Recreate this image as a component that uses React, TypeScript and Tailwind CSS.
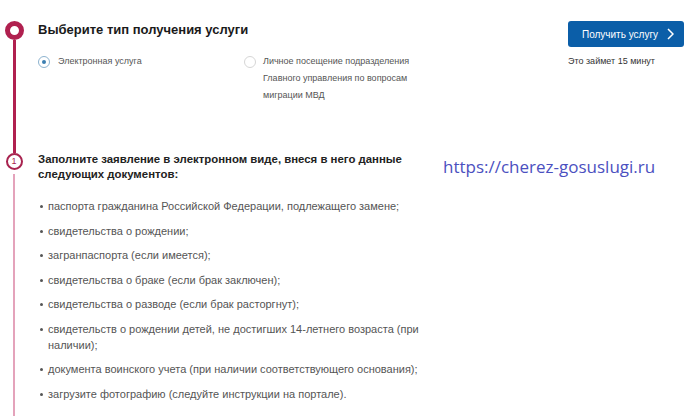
import React from "react";

const docs = [
  "паспорта гражданина Российской Федерации, подлежащего замене;",
  "свидетельства о рождении;",
  "загранпаспорта (если имеется);",
  "свидетельства о браке (если брак заключен);",
  "свидетельства о разводе (если брак расторгнут);",
  "свидетельств о рождении детей, не достигших 14-летнего возраста (при наличии);",
  "документа воинского учета (при наличии соответствующего основания);",
  "загрузите фотографию (следуйте инструкции на портале).",
];

function Radio({ checked }: { checked?: boolean }) {
  return (
    <span
      className={`flex h-[12px] w-[12px] shrink-0 items-center justify-center rounded-full border ${
        checked ? "border-[#8db3cf]" : "border-[#d6d6d6]"
      }`}
    >
      {checked && <span className="h-[4px] w-[4px] rounded-full bg-[#3c7fb1]" />}
    </span>
  );
}

export default function App() {
  return (
    <div className="h-[416px] w-[700px] overflow-hidden bg-white pt-[21px] font-['Liberation_Sans',Arial,sans-serif]">
      {/* step: choose type */}
      <div className="flex h-[132px]">
        <div className="flex w-[28px] flex-col items-center">
          <div className="h-[19px] w-[19px] shrink-0 rounded-full border-[5px] border-[#b0204f]" />
          <div className="w-[3px] flex-1 bg-[#b0204f]" />
        </div>
        <div className="ml-[10px] flex flex-1">
          <div className="flex-1">
            <h2 className="text-[13px] font-bold leading-[18px] text-[#1a1a1a]">
              Выберите тип получения услуги
            </h2>
            <div className="mt-[17px] flex">
              <label className="flex w-[206px] items-start gap-[8px]">
                <Radio checked />
                <span className="-mt-[3px] text-[9px] leading-[17px] text-[#555]">Электронная услуга</span>
              </label>
              <label className="flex items-start gap-[7px]">
                <Radio />
                <span className="-mt-[3px] w-[156px] text-[9px] leading-[17px] text-[#555]">
                  Личное посещение подразделения Главного управления по вопросам миграции МВД
                </span>
              </label>
            </div>
          </div>
          <div className="mr-[16px] w-[116px]">
            <button className="flex h-[26px] w-[116px] items-center justify-center gap-[9px] rounded-[3px] bg-[#0b5ea8] pl-[4px] text-[10px] text-white">
              Получить услугу
              <svg width="7" height="12" viewBox="0 0 7 12" fill="none">
                <path d="M1 1l5 5-5 5" stroke="white" strokeWidth="1.5" />
              </svg>
            </button>
            <p className="mt-[8px] text-[9px] leading-[12px] text-[#333]">Это займет 15 минут</p>
          </div>
        </div>
      </div>

      {/* step 1 */}
      <div className="flex h-[300px]">
        <div className="flex w-[28px] flex-col items-center">
          <div className="flex h-[17px] w-[17px] shrink-0 items-center justify-center rounded-full border-2 border-[#a8234f] text-[9px] leading-none text-[#a8234f]">
            1
          </div>
          <div className="mt-[4px] w-[2px] flex-1 bg-[#e4a3bb]" />
        </div>
        <div className="ml-[10px] flex flex-1">
          <div className="w-[400px]">
            <h3 className="-mt-[1px] w-[380px] text-[11.4px] font-bold leading-[15px] text-[#222]">
              Заполните заявление в электронном виде, внеся в него данные следующих документов:
            </h3>
            <ul className="mt-[16px] flex w-[384px] flex-col gap-[8.5px]">
              {docs.map((d, i) => (
                <li key={i} className="flex text-[11px] leading-[16px] text-[#555]">
                  <span className="mt-[7px] mr-[5px] ml-[2px] h-[3px] w-[3px] shrink-0 rounded-full bg-[#555]" />
                  <span>{d}</span>
                </li>
              ))}
            </ul>
          </div>
          <div className="ml-[5px] pt-[2px] font-['Open_Sans',sans-serif] text-[17px] leading-[24px] text-[#4b50c0]">
            https://cherez-gosuslugi.ru
          </div>
        </div>
      </div>
    </div>
  );
}
